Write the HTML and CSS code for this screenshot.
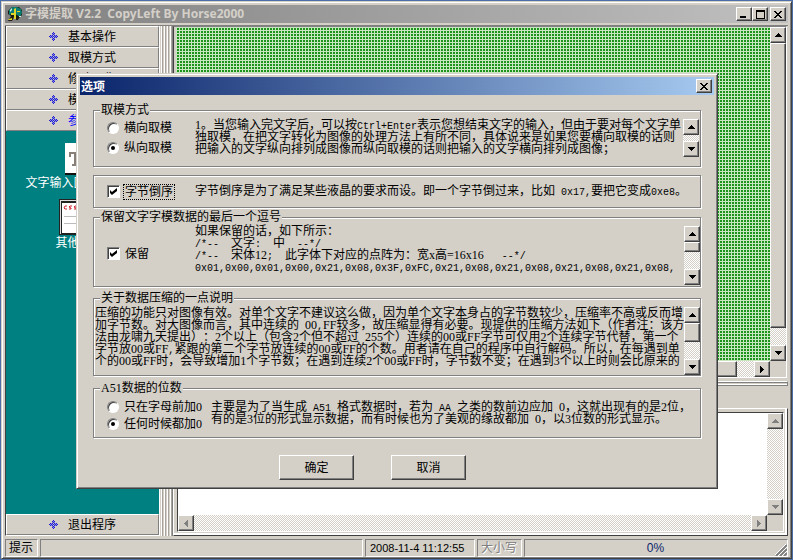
FILE: index.html
```html
<!DOCTYPE html>
<html lang="zh-CN">
<head>
<meta charset="utf-8">
<title>字模提取 V2.2</title>
<link rel="stylesheet" href="styles.css">
</head>
<body>
<svg class="defs" width="0" height="0" aria-hidden="true">
  <symbol id="diamond" viewBox="0 0 9 9"><path fill="#2020d0" d="M4 0h1v1h-1zM3 1h1v1h-1zM5 1h1v1h-1zM4 2h1v1h-1zM1 3h1v1h-1zM3 3h1v1h-1zM5 3h1v1h-1zM7 3h1v1h-1zM0 4h1v1h-1zM2 4h1v1h-1zM4 4h1v1h-1zM6 4h1v1h-1zM8 4h1v1h-1zM1 5h1v1h-1zM3 5h1v1h-1zM5 5h1v1h-1zM7 5h1v1h-1zM4 6h1v1h-1zM3 7h1v1h-1zM5 7h1v1h-1zM4 8h1v1h-1z"/><path fill="#8a8ae0" d="M4 1h1v1h-1zM3 2h1v1h-1zM5 2h1v1h-1zM2 3h1v1h-1zM6 3h1v1h-1zM1 4h1v1h-1zM3 4h1v1h-1zM5 4h1v1h-1zM7 4h1v1h-1zM2 5h1v1h-1zM6 5h1v1h-1zM3 6h1v1h-1zM5 6h1v1h-1zM4 7h1v1h-1z"/></symbol>
  <symbol id="up" viewBox="0 0 7 4"><path d="M3 0h1v1h1v1h1v1h1v1H0V3h1V2h1V1h1z"/></symbol>
  <symbol id="down" viewBox="0 0 7 4"><path d="M0 0h7v1H6v1H5v1H4v1H3V3H2V2H1V1H0z"/></symbol>
  <symbol id="left" viewBox="0 0 4 7"><path d="M4 0v7H3V6H2V5H1V4H0V3h1V2h1V1h1V0z"/></symbol>
  <symbol id="right" viewBox="0 0 4 7"><path d="M0 0h1v1h1v1h1v1h1v1H3v1H2v1H1v1H0z"/></symbol>
  <symbol id="close" viewBox="0 0 8 7"><path d="M0 0h2v1h1v1h2V1h1V0h2v1H7v1H6v1H5v1h1v1h1v1h1v1H6V6H5V5H3v1H2v1H0V6h1V5h1V4h1V3H2V2H1V1H0z"/></symbol>
</svg>

<div class="window">
  <header class="titlebar">
    <svg class="appicon" viewBox="0 0 16 16" aria-hidden="true">
      <path fill="#1c1c10" d="M5 1h7l3 3v5l-3 3-1 2H9v-3H7l-2 4H1l3-5-3-2V5z"/>
      <path fill="#0b7d73" d="M5 1h5l4 2 1 4-2 4-3-2-4-2-4 2V4z"/>
      <path fill="#e0d428" d="M7 3l2-1v11H7V9H4V7h3zM2 13l3-1v2H1zM10 5h3v1h-3z"/>
      <path fill="#d6ece0" d="M3 4l2-2v2l-2 2zM12 10h2v1h-2z"/>
    </svg>
    <h1>字模提取 V2.2&nbsp; CopyLeft By Horse2000</h1>
    <div class="captions">
      <button class="cap" aria-label="最小化"><svg width="8" height="7"><path d="M0 5h6v2H0z"/></svg></button>
      <button class="cap" aria-label="最大化"><svg width="9" height="9"><path fill-rule="evenodd" d="M0 0h9v9H0zM1 2v6h7V2z"/></svg></button>
      <button class="cap gap" aria-label="关闭"><svg width="8" height="7"><use href="#close"/></svg></button>
    </div>
  </header>

  <main class="workspace">
    <nav class="sidebar">
      <button class="tab"><svg><use href="#diamond"/></svg>基本操作</button>
      <button class="tab"><svg><use href="#diamond"/></svg>取模方式</button>
      <button class="tab"><svg><use href="#diamond"/></svg>修改图像</button>
      <button class="tab"><svg><use href="#diamond"/></svg>模拟动画</button>
      <button class="tab current"><svg><use href="#diamond"/></svg>参数设置</button>
      <div class="items">
        <a class="item" href="#font">
          <svg width="32" height="32" viewBox="0 0 32 32"><path fill="#fff" d="M2 0h30v31H2z"/><path fill="#111" d="M2 30h30v2H2z"/><path fill="#888078" d="M6 9h14v5h-2v-3h-3v10h2v2H9v-2h2V11H8v3H6z"/></svg>
          文字输入区字体选择</a>
        <a class="item" href="#others">
          <svg width="40" height="36" viewBox="0 0 40 36"><path fill="#222" d="M0 0h40v36H0z"/><path fill="#ddd" d="M1 1h38v1H1zM1 1h1v34H1z"/><path fill="#fff" d="M3 4h33v30H3z"/><path fill="none" stroke="#d02030" d="M8 7H6l-1 2 1 1h2M13 7h-2l-1 1 2 1v1h-2M18 7h-2l-1 1 2 1v1h-2"/><path fill="#bbb" d="M5 17h28v1H5zM5 24h28v1H5z"/></svg>
          其他选项</a>
      </div>
      <button class="tab"><svg><use href="#diamond"/></svg>退出程序</button>
    </nav>
    <div class="vsplit"></div>

    <section class="content">
      <div class="canvas">
        <div class="dots"></div>
        <div class="vbar">
          <button class="arrow" aria-label="向上"><svg width="7" height="4"><use href="#up"/></svg></button>
          <span class="thumb grow"></span><span class="space"></span>
          <button class="arrow" aria-label="向下"><svg width="7" height="4"><use href="#down"/></svg></button>
        </div>
        <div class="hbar">
          <button class="arrow" aria-label="向左"><svg width="4" height="7"><use href="#left"/></svg></button>
          <span class="thumb grow"></span><span class="space"></span>
          <button class="arrow" aria-label="向右"><svg width="4" height="7"><use href="#right"/></svg></button>
        </div>
      </div>
      <div class="hsplit"></div>
      <div class="output">
        <div class="memo off">
          <div class="page"></div>
          <div class="vbar">
            <button class="arrow" aria-label="向上"><svg width="7" height="4"><use href="#up"/></svg></button>
            <button class="arrow" aria-label="向下"><svg width="7" height="4"><use href="#down"/></svg></button>
          </div>
          <div class="hbar">
            <button class="arrow" aria-label="向左"><svg width="4" height="7"><use href="#left"/></svg></button>
            <button class="arrow" aria-label="向右"><svg width="4" height="7"><use href="#right"/></svg></button>
          </div>
        </div>
      </div>
    </section>
  </main>

  <footer class="status">
    <span class="cell">提示</span>
    <span class="cell wide"></span>
    <span class="cell date">2008-11-4 11:12:55</span>
    <span class="cell caps">大小写</span>
    <span class="cell progress">0%<svg class="grip" width="12" height="12"><path stroke="#808080" stroke-width="2" d="M1 12L12 1M5 12l7-7M9 12l3-3"/><path stroke="#fff" d="M0 11L11 0M3 12l9-9M7 12l5-5"/></svg></span>
  </footer>
</div>

<form class="dialog" role="dialog" aria-labelledby="dlg">
  <div class="dlgbar">
    <h2 id="dlg">选项</h2>
    <button type="button" class="cap" aria-label="关闭"><svg width="8" height="7"><use href="#close"/></svg></button>
  </div>
  <div class="dlgbody">
    <fieldset class="mode">
      <legend>取模方式</legend>
      <div class="row">
        <div class="opts">
          <label><input type="radio" name="mode">横向取模</label>
          <label><input type="radio" name="mode" checked>纵向取模</label>
        </div>
        <p class="note">1。当您输入完文字后，可以按<code>Ctrl+Enter</code>表示您想结束文字的输入，但由于要对每个文字单<br>独取模，在把文字转化为图像的处理方法上有所不同，具体说来是如果您要横向取模的话则<br>把输入的文字纵向排列成图像而纵向取模的话则把输入的文字横向排列成图像；</p>
        <div class="vbar">
          <button type="button" class="arrow" aria-label="向上"><svg width="7" height="4"><use href="#up"/></svg></button>
          <button type="button" class="arrow" aria-label="向下"><svg width="7" height="4"><use href="#down"/></svg></button>
        </div>
      </div>
    </fieldset>

    <fieldset class="order">
      <div class="row">
        <div class="opts"><label><input type="checkbox" checked><span class="focus">字节倒序</span></label></div>
        <p class="note">字节倒序是为了满足某些液晶的要求而设。即一个字节倒过来，比如<code> 0x17,</code>要把它变成<code>0xe8</code>。</p>
      </div>
    </fieldset>

    <fieldset class="keep">
      <legend>保留文字字模数据的最后一个逗号</legend>
      <div class="row">
        <div class="opts"><label><input type="checkbox" checked>保留</label></div>
        <p class="note">如果保留的话，如下所示：<br><code>/*--  </code>文字<code>:  </code>中<code>  --*/</code><br><code>/*--  </code>宋体12<code>;  </code>此字体下对应的点阵为：宽x高=16x16<code>   --*/</code><br><code>0x01,0x00,0x01,0x00,0x21,0x08,0x3F,0xFC,0x21,0x08,0x21,0x08,0x21,0x08,0x21,0x08,</code></p>
        <div class="vbar">
          <button type="button" class="arrow" aria-label="向上"><svg width="7" height="4"><use href="#up"/></svg></button>
          <span class="thumb short"></span>
          <button type="button" class="arrow" aria-label="向下"><svg width="7" height="4"><use href="#down"/></svg></button>
        </div>
      </div>
    </fieldset>

    <fieldset class="pack">
      <legend>关于数据压缩的一点说明</legend>
      <div class="row">
        <p class="note">压缩的功能只对图像有效。对单个文字不建议这么做，因为单个文字本身占的字节数较少，压缩率不高或反而增<br>加字节数。对大图像而言，其中连续的<code> </code>00<code>,</code>FF较多，故压缩显得有必要。现提供的压缩方法如下（作者注：该方<br>法由龙啸九天提出）：2个以上（包含2个但不超过<code> </code>255个）连续的00或FF字节可仅用2个连续字节代替，第一个<br>字节放00或FF<code>,</code>紧跟的第二个字节放连续的00或FF的个数。用者请在自己的程序中自行解码。所以，在每遇到单<br>个的00或FF时，会导致增加1个字节数；在遇到连续2个00或FF时，字节数不变；在遇到3个以上时则会比原来的</p>
        <div class="vbar">
          <button type="button" class="arrow" aria-label="向上"><svg width="7" height="4"><use href="#up"/></svg></button>
          <span class="thumb"></span>
          <button type="button" class="arrow" aria-label="向下"><svg width="7" height="4"><use href="#down"/></svg></button>
        </div>
      </div>
    </fieldset>

    <fieldset class="digits">
      <legend>A51数据的位数</legend>
      <div class="row">
        <div class="opts">
          <label><input type="radio" name="digits">只在字母前加0</label>
          <label><input type="radio" name="digits" checked>任何时候都加0</label>
        </div>
        <p class="note">主要是为了当生成<code> A51 </code>格式数据时，若为<code> AA </code>之类的数前边应加<code> </code>0，这就出现有的是2位，<br>有的是3位的形式显示数据，而有时候也为了美观的缘故都加<code> </code>0，以3位数的形式显示。</p>
      </div>
    </fieldset>

    <div class="actions">
      <button type="submit" class="push">确定</button>
      <button type="button" class="push">取消</button>
    </div>
  </div>
</form>
</body>
</html>
```

FILE: styles.css
```css
:root {
  --face: #d4d0c8;
  --dark: #808080;
  --deep: #404040;
}

* { box-sizing: border-box; }

body {
  margin: 0;
  padding: 1px 1px 1px 1px;
  min-height: 100vh;
  display: flex;
  background: #4a6ea5;
  color: #000;
  font: 12px/12px "Liberation Serif", "Noto Sans CJK SC", serif;
  text-spacing-trim: space-all;
}

h1, h2, p { margin: 0; }
button { font: inherit; color: inherit; padding: 0; }
svg { display: block; flex: none; }
.defs { position: absolute; }

.window {
  flex: 1;
  display: flex;
  flex-direction: column;
  background: var(--face);
  border: 1px solid;
  border-color: var(--face) var(--deep) var(--deep) var(--face);
  box-shadow: inset 1px 1px #fff, inset -1px -1px var(--dark);
  padding: 3px 3px 1px;
}

/* title bars */
.titlebar {
  height: 18px;
  display: flex;
  align-items: center;
  padding: 0 2px;
  background: linear-gradient(90deg, #808080, #c0c0c0);
}
.appicon { width: 16px; height: 16px; }
.titlebar h1 {
  flex: 1;
  margin-left: 2px;
  color: var(--face);
  font: bold 12px/16px "Noto Sans", "Noto Sans CJK SC", sans-serif;
  white-space: nowrap;
}
.captions { display: flex; }
.cap {
  width: 16px;
  height: 14px;
  display: flex;
  align-items: center;
  justify-content: center;
  background: var(--face);
  border: 1px solid;
  border-color: #fff var(--deep) var(--deep) #fff;
  box-shadow: inset -1px -1px var(--dark);
}
.cap.gap { margin-left: 2px; }

/* main area */
.workspace {
  flex: 1;
  display: flex;
  margin-top: 2px;
  border-top: 1px solid var(--dark);
}
.sidebar {
  width: 155px;
  display: flex;
  flex-direction: column;
  border: 1px solid;
  border-color: var(--deep) #fff #fff var(--deep);
  border-top: 0;
}
.tab {
  height: 21px;
  display: flex;
  align-items: center;
  gap: 10px;
  padding: 0 0 0 42px;
  background: var(--face);
  border: 1px solid;
  border-color: #fff var(--dark) var(--dark) #fff;
}
.tab svg { width: 9px; height: 9px; }
.tab.current { color: #0000ff; }
.items {
  flex: 1;
  display: flex;
  flex-direction: column;
  align-items: center;
  gap: 10px;
  padding: 12px 6px 0 0;
  background: #008080;
}
.item {
  display: flex;
  flex-direction: column;
  align-items: center;
  gap: 2px;
  color: #fff;
  text-decoration: none;
  white-space: nowrap;
}
.vsplit {
  width: 12px;
  background: repeating-linear-gradient(90deg, var(--face) 0 1px, #fff 1px 2px, #a8a49c 2px 3px);
}
.content {
  flex: 1;
  display: flex;
  flex-direction: column;
  border-left: 1px solid var(--dark);
}
.canvas {
  flex: 1;
  display: grid;
  grid-template: 1fr 16px / 1fr 16px;
  padding-left: 2px;
  border: 1px solid;
  border-color: var(--dark) #fff #fff var(--deep);
  margin-right: 1px;
}
.dots {
  background:
    linear-gradient(90deg, #c8e6c0 1px, transparent 1px) 0 0 / 3px 3px,
    linear-gradient(#c8e6c0 1px, #1c941c 1px) 0 0 / 3px 3px;
}
.hsplit {
  height: 5px;
  margin: 3px 0 22px;
  border: 1px solid;
  border-color: #fff var(--dark) var(--dark) #fff;
  box-shadow: inset 0 1px var(--dark), inset 0 -1px #fff;
}
.output {
  height: 128px;
  display: flex;
  padding: 3px;
  border: 1px solid;
  border-color: #fff var(--deep) var(--deep) #fff;
  box-shadow: inset -2px -2px #fff;
}
.memo {
  flex: 1;
  display: grid;
  grid-template: 1fr 16px / 1fr 16px;
  border: 1px solid;
  border-color: var(--deep) #fff #fff var(--deep);
  background: var(--face);
}
.page { background: #fff; }

/* scroll bars */
.vbar, .hbar {
  display: flex;
  justify-content: space-between;
  background: repeating-conic-gradient(#fff 0 25%, var(--face) 0 50%) 0 0 / 2px 2px;
}
.vbar { width: 16px; flex-direction: column; }
.arrow, .thumb {
  width: 16px;
  height: 16px;
  display: flex;
  align-items: center;
  justify-content: center;
  background: var(--face);
  border: 1px solid;
  border-color: #fff var(--deep) var(--deep) #fff;
  box-shadow: inset -1px -1px var(--dark);
}
.off svg { fill: var(--dark); }
.grow { flex: 1; height: auto; }
.space { width: 17px; height: 17px; }

/* status bar */
.status {
  display: flex;
  gap: 2px;
  margin: 3px 0 0;
}
.cell {
  height: 18px;
  padding: 0 4px 0 3px;
  border: 1px solid;
  border-color: var(--dark) #fff #fff var(--dark);
  line-height: 16px;
  white-space: nowrap;
}
.wide { flex: 1; }
.date { width: 110px; padding-left: 4px; font-family: "Liberation Sans", sans-serif; font-size: 11px; }
.caps { color: var(--dark); text-shadow: 1px 1px #fff; }
.progress {
  width: 264px;
  display: flex;
  justify-content: center;
  position: relative;
  color: #0a246a;
  font-family: "Liberation Sans", sans-serif;
}
.grip { position: absolute; right: 0; bottom: 0; }

/* options dialog */
.dialog {
  position: absolute;
  left: 76px;
  top: 73px;
  width: 642px;
  background: var(--face);
  border: 1px solid;
  border-color: var(--face) var(--deep) var(--deep) var(--face);
  box-shadow: inset 1px 1px #fff, inset -1px -1px var(--dark);
  padding: 3px;
}
.dlgbar {
  height: 18px;
  display: flex;
  align-items: center;
  justify-content: space-between;
  padding: 0 2px 0 1px;
  background: linear-gradient(90deg, #0a246a, #a6caf0);
  color: #fff;
}
.dlgbar h2 { font: bold 12px/16px "Noto Sans CJK SC", sans-serif; }
.dlgbar svg { fill: #000; }
.dlgbody { padding: 9px 13px 5px; }

fieldset {
  min-width: 0;
  margin: 0 0 8px;
  padding: 0;
  border: 1px solid var(--dark);
  box-shadow: 1px 1px #fff, inset 1px 1px #fff;
}
legend {
  margin-left: 6px;
  padding: 0 1px;
  background: var(--face);
}
.row { display: flex; align-items: flex-start; }
.opts {
  width: 101px;
  display: flex;
  flex-direction: column;
  padding-left: 13px;
}
.note { flex: 1; white-space: nowrap; }
code { font: 10px/0 "Liberation Mono", monospace; white-space: pre; }
label { display: flex; align-items: center; gap: 5px; white-space: nowrap; }

input { appearance: none; flex: none; display: grid; place-content: center; margin: 0; background: #fff; }
input[type="radio"] {
  width: 12px;
  height: 12px;
  border: 1px solid;
  border-color: var(--dark) #fff #fff var(--dark);
  border-radius: 50%;
  box-shadow: inset 1px 1px var(--deep);
}
input[type="radio"]:checked::before {
  content: "";
  width: 4px;
  height: 4px;
  border-radius: 50%;
  background: #000;
}
input[type="checkbox"] {
  width: 13px;
  height: 13px;
  border: 1px solid;
  border-color: var(--dark) #fff #fff var(--dark);
  box-shadow: inset 1px 1px var(--deep);
}
input[type="checkbox"]:checked::before {
  content: "";
  width: 7px;
  height: 7px;
  background: #000;
  clip-path: polygon(0 28%, 28% 57%, 100% 0, 100% 42%, 28% 100%, 0 71%);
}
.focus { outline: 1px dotted #000; outline-offset: 1px; }

.mode .row { padding: 3px 1px 9px 0; }
.mode .opts { gap: 8px; padding-top: 3px; }
.mode .vbar { height: 38px; }
.order { margin-bottom: 3px; }
.order .row { padding: 9px 0; }
.keep { margin-bottom: 5px; }
.keep .row { padding-bottom: 1px; }
.keep .opts { padding-top: 24px; }
.keep .note { padding-top: 2px; }
.keep .vbar { height: 59px; margin-top: 3px; justify-content: flex-start; }
.keep .arrow:last-child, .pack .arrow:last-child { margin-top: auto; }
.short { height: 10px; }
.pack { margin-bottom: 6px; }
.pack .note { padding: 3px 0 0 1px; }
.pack .vbar { height: 68px; margin: 3px 0 0; justify-content: flex-start; }
.pack .thumb { height: 19px; }
.digits { margin-bottom: 17px; }
.digits .row { padding: 7px 0; }
.digits .opts { width: 117px; gap: 5px; }

.actions { display: flex; gap: 37px; padding-left: 186px; }
.push {
  width: 75px;
  height: 25px;
  background: var(--face);
  border: 1px solid;
  border-color: #fff var(--deep) var(--deep) #fff;
  box-shadow: inset -1px -1px var(--dark);
}
```
